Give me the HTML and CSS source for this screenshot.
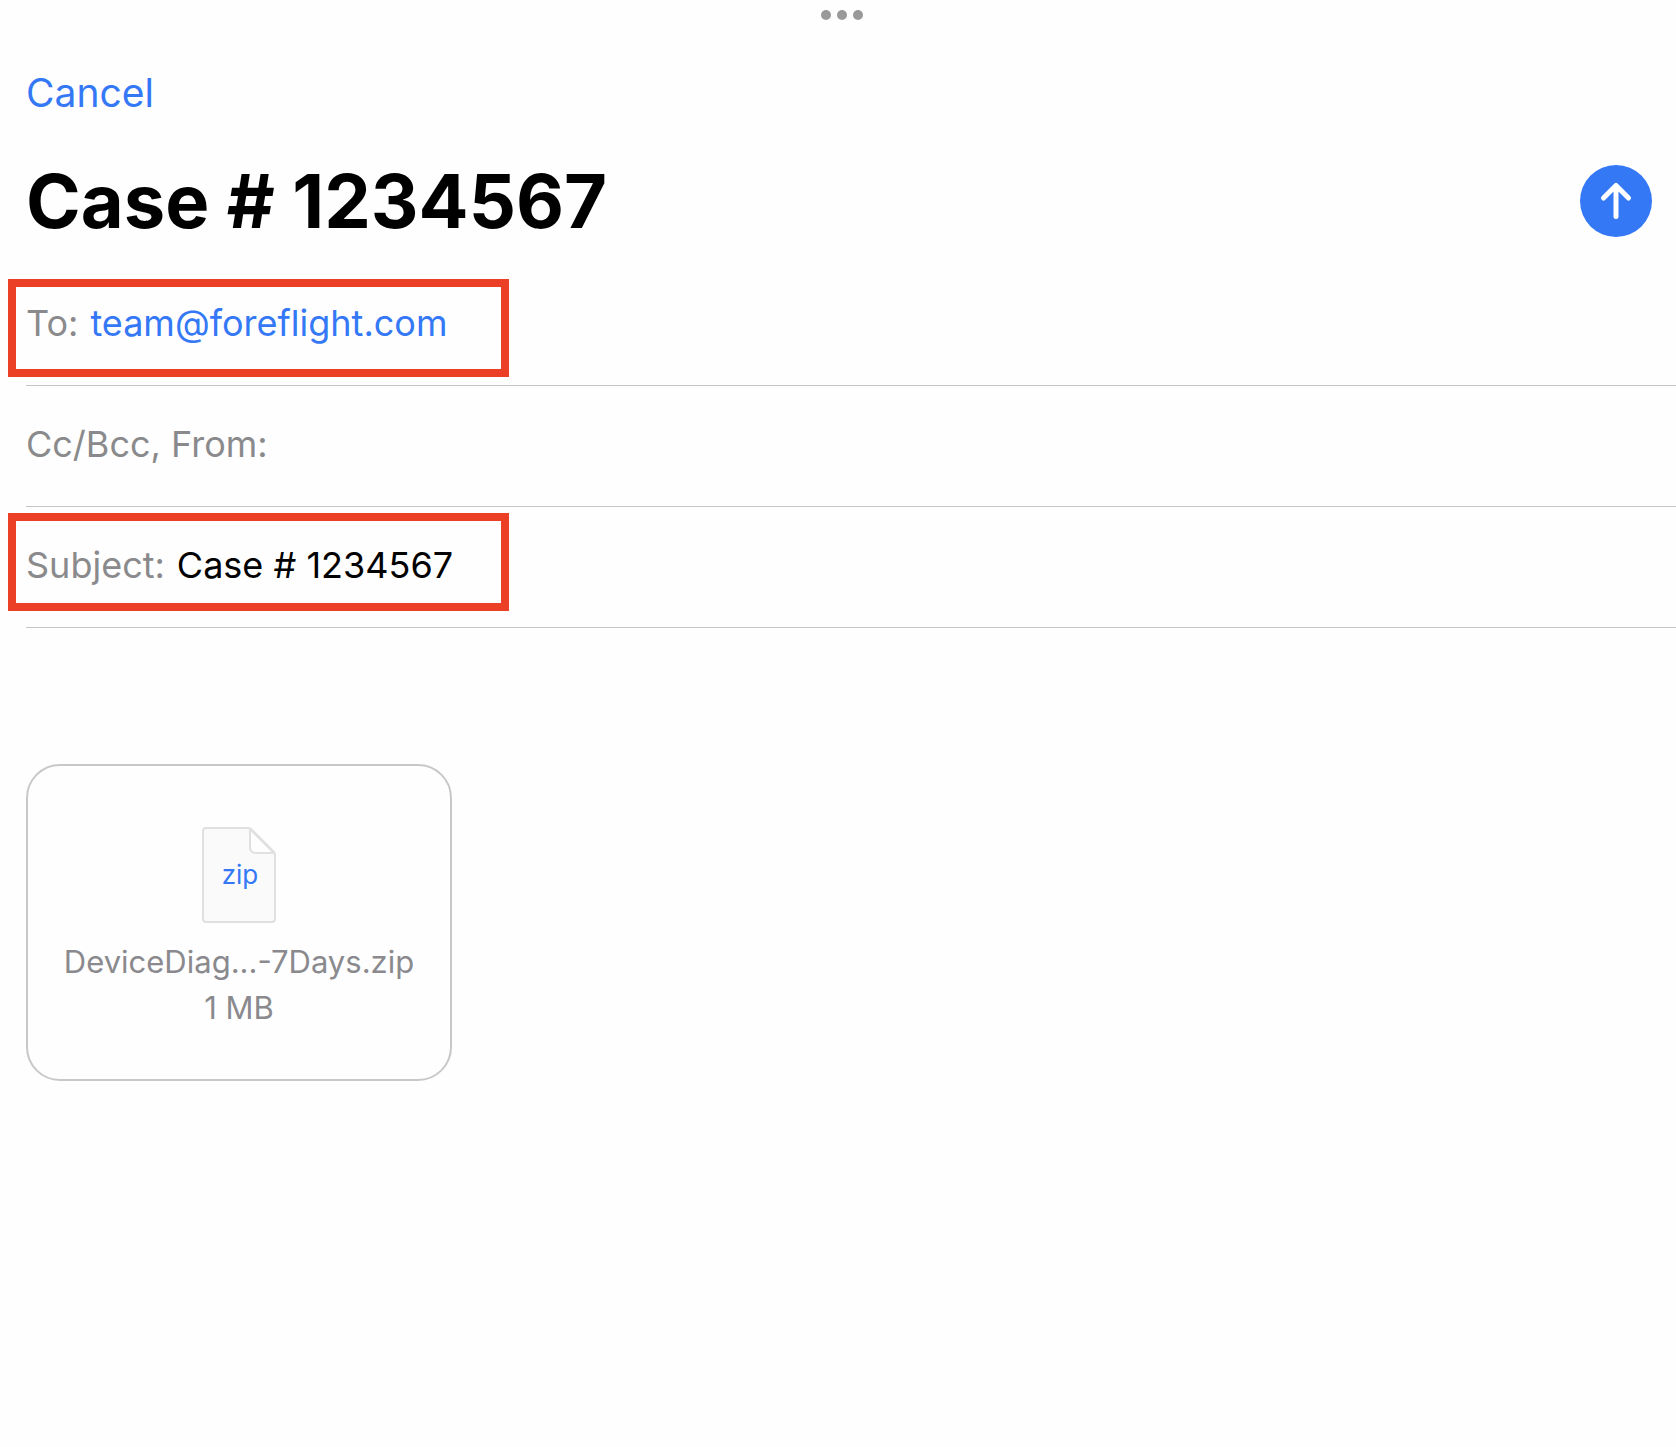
FILE: index.html
```html
<!DOCTYPE html>
<html lang="en">
<head>
<meta charset="utf-8">
<meta name="viewport" content="width=device-width, initial-scale=1">
<title>Case # 1234567</title>
<link rel="stylesheet" href="styles.css">
</head>
<body>
<form class="compose">
  <div class="grabber" aria-hidden="true"><span class="dot"></span><span class="dot"></span><span class="dot"></span></div>
  <header class="toolbar">
    <button type="button" class="cancel">Cancel</button>
    <div class="title-row">
      <h1 class="title">Case # 1234567</h1>
      <button type="submit" class="send" aria-label="Send">
        <svg class="send-icon" viewBox="0 0 72 72" aria-hidden="true">
          <path d="M36 51.500V20.500M23.500 33L36 20.500L48.500 33"/>
        </svg>
      </button>
    </div>
  </header>
  <div class="fields">
    <div class="field">
      <span class="label">To:</span>
      <a class="address" href="mailto:team@foreflight.com">team@foreflight.com</a>
      <span class="callout callout-low" aria-hidden="true"></span>
    </div>
    <div class="field">
      <label class="label" for="cc">Cc/Bcc, From:</label>
      <input class="input" id="cc" type="text">
    </div>
    <div class="field">
      <label class="label" for="subject">Subject:</label>
      <input class="input" id="subject" type="text" value="Case # 1234567">
      <span class="callout callout-high" aria-hidden="true"></span>
    </div>
  </div>
  <section class="message">
    <figure class="attachment">
      <svg class="file" viewBox="0 0 74 96" aria-hidden="true">
        <path class="file-page" d="M4 1H46Q48 1 49 2L72 25Q73 26 73 28V92Q73 95 70 95H4Q1 95 1 92V4Q1 1 4 1Z"/>
        <path class="file-fold" d="M48 2V20Q48 26 54 26H72Z"/>
        <text class="file-type" x="38" y="57">zip</text>
      </svg>
      <figcaption class="caption">
        <span>DeviceDiag...-7Days.zip</span>
        <span>1 MB</span>
      </figcaption>
    </figure>
  </section>
</form>
</body>
</html>
```
FILE: styles.css
```css
* {
  box-sizing: border-box;
}

body {
  margin: 0;
  background: #fefefe;
  color: #000;
  font-family: Inter, "Liberation Sans", sans-serif;
}

button,
input {
  margin: 0;
  padding: 0;
  border: 0;
  background: none;
  color: inherit;
  font: inherit;
}

.compose {
  display: flex;
  flex-direction: column;
  min-height: 100vh;
}

.grabber {
  display: flex;
  justify-content: center;
  gap: 6px;
  padding: 10px 0 0 8px;
}

.dot {
  width: 10px;
  height: 10px;
  border-radius: 50%;
  background: #999;
}

.toolbar {
  display: flex;
  flex-direction: column;
  align-items: flex-start;
  gap: 40px;
  padding: 49px 24px 20px 26px;
}

.cancel {
  color: #3478f6;
  font-size: 39px;
  line-height: 48px;
}

.title-row {
  display: flex;
  align-items: center;
  justify-content: space-between;
  width: 100%;
}

.title {
  margin: 0;
  font-size: 74px;
  font-weight: 700;
  line-height: 88px;
}

.send {
  flex: none;
  width: 72px;
  height: 72px;
  border-radius: 50%;
  background: #3478f6;
}

.send-icon {
  display: block;
  fill: none;
  stroke: #fff;
  stroke-width: 5;
  stroke-linecap: round;
  stroke-linejoin: round;
}

.fields {
  padding-left: 26px;
}

.field {
  position: relative;
  display: flex;
  align-items: center;
  gap: 12px;
  height: 121px;
  padding-bottom: 4px;
  border-bottom: 1px solid #c6c6c8;
  font-size: 36px;
  line-height: 48px;
}

/* Red call-out drawn over a field */
.callout {
  position: absolute;
  left: -18px;
  width: 501px;
  height: 98px;
  border: 8px solid #eb4026;
  pointer-events: none;
}

.callout-low {
  bottom: 8px;
}

.callout-high {
  bottom: 16px;
}

.label {
  color: #8a8a8c;
}

.address {
  color: #3478f6;
  text-decoration: none;
}

.input {
  flex: 1;
  min-width: 0;
  outline: 0;
}

.message {
  padding: 136px 24px 24px 26px;
}

.attachment {
  display: flex;
  flex-direction: column;
  align-items: center;
  gap: 16px;
  width: 426px;
  margin: 0;
  padding: 61px 16px 48px;
  border: 2px solid #c8c8ca;
  border-radius: 34px;
}

.file {
  width: 74px;
  height: 96px;
}

.file-page {
  fill: #fafafa;
  stroke: #e0e0e0;
  stroke-width: 2;
}

.file-fold {
  fill: #fefefe;
  stroke: #e0e0e0;
  stroke-width: 2;
  stroke-linejoin: round;
}

.file-type {
  fill: #3478f6;
  font-size: 26px;
  text-anchor: middle;
}

.caption {
  display: flex;
  flex-direction: column;
  align-items: center;
  color: #8a8a8e;
  font-size: 31px;
  line-height: 46px;
}
```
